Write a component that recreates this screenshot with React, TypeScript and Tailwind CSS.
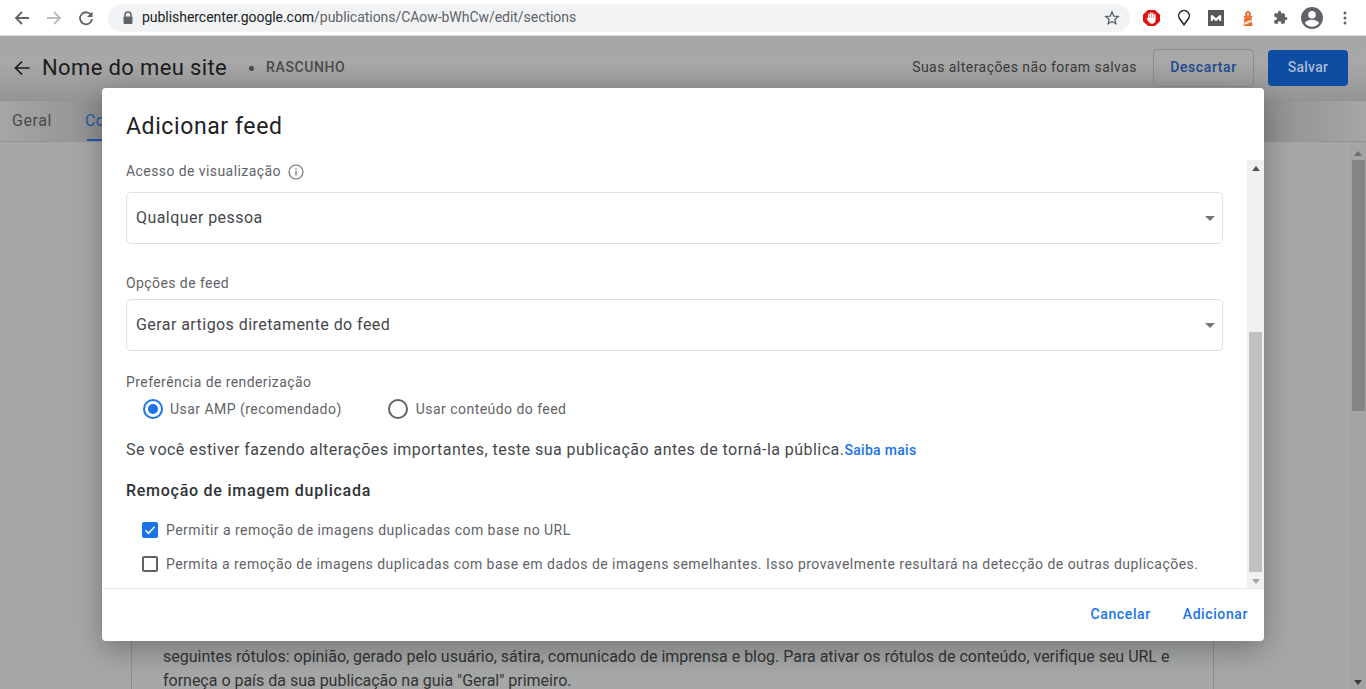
import React from "react";

const Caret = () => (
  <svg width="10" height="5" viewBox="0 0 10 5" className="block"><path d="M0 0h10L5 5z" fill="#757575" /></svg>
);

const ScrollUp = ({ c }: { c: string }) => (
  <svg width="8" height="5" viewBox="0 0 8 5" className="block"><path d="M4 0l4 5H0z" fill={c} /></svg>
);
const ScrollDown = ({ c }: { c: string }) => (
  <svg width="8" height="5" viewBox="0 0 8 5" className="block"><path d="M0 0h8L4 5z" fill={c} /></svg>
);

function SelectBox({ value }: { value: string }) {
  return (
    <div className="flex h-[52px] items-center justify-between rounded-[5px] border border-[#e0e0e0] pl-[9px] pr-[7px] text-[16px] tracking-[0.44px] text-[#45484b]">
      <span>{value}</span>
      <Caret />
    </div>
  );
}

function Toolbar() {
  return (
    <div className="flex h-[36px] shrink-0 items-center border-b border-[#dcdcdc] bg-white pl-[14px]">
      <svg width="16" height="16" viewBox="0 0 16 16" className="shrink-0"><path d="M15 8H2.500M8 2L2 8l6 6" fill="none" stroke="#5f6368" strokeWidth="1.800" /></svg>
      <svg width="16" height="16" viewBox="0 0 16 16" className="ml-[16px] shrink-0"><path d="M1 8h12.500M8 2l6 6-6 6" fill="none" stroke="#b9bbbe" strokeWidth="1.800" /></svg>
      <svg width="16" height="16" viewBox="0 0 16 16" className="ml-[16px] shrink-0"><path d="M13.200 5.200A6 6 0 1 0 14 9" fill="none" stroke="#5f6368" strokeWidth="1.800" /><path d="M14.500 1.500V7H9z" fill="#5f6368" /></svg>
      <div className="ml-[14px] flex h-[28px] w-[1022px] shrink-0 items-center rounded-full bg-[#f1f3f4] pl-[14px] pr-[10px]">
        <svg width="12" height="14" viewBox="0 0 12 14" className="shrink-0"><path d="M3 6V4a3 3 0 0 1 6 0v2" fill="none" stroke="#5f6368" strokeWidth="1.500" /><rect x="1.500" y="5.500" width="9" height="7.500" rx="1" fill="#5f6368" /></svg>
        <span className="ml-[8px] whitespace-nowrap text-[14px] tracking-[-0.04px] text-[#202124]">
          publishercenter.google.com<span className="text-[#5f6368]">/publications/CAow-bWhCw/edit/sections</span>
        </span>
        <svg width="16" height="16" viewBox="0 0 24 24" className="ml-auto shrink-0"><path d="M12 3l2.700 6.100 6.600.6-5 4.400 1.500 6.500L12 17.200l-5.800 3.400 1.500-6.500-5-4.400 6.600-.6z" fill="none" stroke="#5f6368" strokeWidth="2" /></svg>
      </div>
      <svg width="17" height="16" viewBox="0 0 17 16" className="ml-[13px] shrink-0">
        <path d="M5 0h7l5 4.800v6.400L12 16H5l-5-4.800V4.800z" fill="#e0120f" />
        <g fill="#fff">
          <rect x="5" y="3.500" width="1.600" height="6" rx=".8" />
          <rect x="7" y="2.300" width="1.600" height="7" rx=".8" />
          <rect x="9" y="2.800" width="1.600" height="7" rx=".8" />
          <rect x="11" y="4" width="1.500" height="6" rx=".75" />
          <path d="M5 8h7.500v2.500c0 2-1.500 3.200-3.500 3.200-1.700 0-2.600-.8-3.300-2L3.700 9c-.3-.6.500-1.300 1.100-.8z" />
        </g>
      </svg>
      <svg width="14" height="17" viewBox="0 0 14 17" className="ml-[17px] shrink-0"><path d="M7 15.800L3 10.300a5.300 5.300 0 1 1 8 0z" fill="none" stroke="#202124" strokeWidth="1.500" /></svg>
      <svg width="16" height="16" viewBox="0 0 16 16" className="ml-[17px] shrink-0"><rect width="16" height="16" fill="#54585a" /><path d="M2.800 11V5.300h1.800L8 8.300l3.400-3h1.800V11h-2V8.400L8 11.200 4.800 8.400V11z" fill="#fff" /></svg>
      <svg width="12" height="16" viewBox="0 0 12 16" className="ml-[18px] shrink-0">
        <path d="M3.200 6V2.800L6 .5l2.800 2.300V6z" fill="#ea6a30" />
        <rect x="5" y="3" width="2" height="2.500" fill="#fbd9c2" />
        <rect x="1.800" y="6" width="8.400" height="1.600" fill="#ea6a30" />
        <path d="M2.500 7.600h7l1 8.400h-9z" fill="#ea6a30" />
        <path d="M2.300 12.600L9.400 9.400l.4 2.600-7.800 3z" fill="#fbe3d2" />
      </svg>
      <svg width="15" height="15" viewBox="0 0 24 24" className="ml-[19px] shrink-0"><path d="M20.500 11H19V7a2 2 0 0 0-2-2h-4V3.500a2.500 2.500 0 0 0-5 0V5H4a2 2 0 0 0-2 2v3.800h1.500a2.700 2.700 0 0 1 0 5.400H2V20a2 2 0 0 0 2 2h3.800v-1.500a2.700 2.700 0 0 1 5.400 0V22H17a2 2 0 0 0 2-2v-4h1.500a2.500 2.500 0 0 0 0-5z" fill="#5f6368" /></svg>
      <svg width="24" height="24" viewBox="0 0 24 24" className="ml-[12px] shrink-0"><path d="M12 1a11 11 0 1 0 0 22 11 11 0 0 0 0-22zm0 4a3.800 3.800 0 1 1 0 7.600A3.800 3.800 0 0 1 12 5zm0 15.800a8.800 8.800 0 0 1-7-3.500c0-2.300 4.700-3.600 7-3.600s7 1.300 7 3.600a8.800 8.800 0 0 1-7 3.500z" fill="#5f6368" /></svg>
      <svg width="4" height="14" viewBox="0 0 4 14" className="ml-[19px] shrink-0"><circle cx="2" cy="2" r="1.500" fill="#5f6368" /><circle cx="2" cy="7" r="1.500" fill="#5f6368" /><circle cx="2" cy="12" r="1.500" fill="#5f6368" /></svg>
    </div>
  );
}

function Background() {
  return (
    <div className="flex min-h-0 flex-1 flex-col bg-[#a6a7a7]">
      <div className="flex h-[65px] shrink-0 items-center border-b border-[#929292] bg-[linear-gradient(#a6a6a6,#a8a8a8_40%,#959595)] pl-[14px] pr-[18px]">
        <svg width="16" height="16" viewBox="0 0 16 16" className="shrink-0"><path d="M15.500 8H1.500M8 1.500L1.500 8 8 14.500" fill="none" stroke="#1c1c1c" strokeWidth="1.700" /></svg>
        <span className="mb-[2px] ml-[12px] text-[22px] tracking-[0.37px] text-[#1c1c1c]">Nome do meu site</span>
        <span className="ml-[22px] h-[5px] w-[5px] rounded-full bg-[#4a4a4a]" />
        <span className="mb-[1px] ml-[12px] text-[14px] font-medium tracking-[0.6px] text-[#4a4a4a]">RASCUNHO</span>
        <span className="mb-[1px] ml-auto text-[14px] tracking-[0.46px] text-[#3a3a3a]">Suas alterações não foram salvas</span>
        <div className="ml-[16px] flex h-[38px] w-[101px] items-center justify-center rounded-[4px] border border-[#8c8c8c] pb-[2px] text-[14px] font-medium tracking-[0.6px] text-[#204b8f]">Descartar</div>
        <div className="ml-[14px] flex h-[36px] w-[80px] items-center justify-center rounded-[4px] bg-[#0f4da2] pb-[2px] text-[14px] font-medium tracking-[0.3px] text-[#a8bad4]">Salvar</div>
      </div>
      <div className="flex h-[41px] shrink-0 items-center gap-[33px] border-b border-[#929292] bg-[linear-gradient(90deg,#a6a6a6,#8f8f8f_8%,#8f8f8f_92%,#a6a6a6)] pl-[12px]">
        <span className="text-[16px] tracking-[0.6px] text-[#4a4a4a]">Geral</span>
        <span className="text-[16px] tracking-[0.2px] text-[#1c5bb0]">Co</span>
      </div>
      <div className="flex min-h-0 flex-1">
        <div className="min-w-0 flex-1 pl-[131px] pr-[136px]">
          <div className="flex h-full flex-col justify-end border-x border-[#8e8e8e] pl-[31px] pr-[30px]">
            <div className="-mb-[4px] text-[16px] leading-[24px] tracking-[-0.012px] text-[#333436]">
              <p className="whitespace-nowrap">seguintes rótulos: opinião, gerado pelo usuário, sátira, comunicado de imprensa e blog. Para ativar os rótulos de conteúdo, verifique seu URL e</p>
              <p className="whitespace-nowrap">forneça o país da sua publicação na guia "Geral" primeiro.</p>
            </div>
          </div>
        </div>
        <div className="flex w-[16px] shrink-0 flex-col items-center bg-[#a3a4a4] pt-[9px] pb-[4px]">
          <ScrollUp c="#6e6e6e" />
          <div className="mt-[4px] h-[251px] w-[13px] bg-[#848585]" />
          <div className="mt-auto"><ScrollDown c="#3c3c3c" /></div>
        </div>
      </div>
    </div>
  );
}

function Modal() {
  return (
    <div className="absolute left-[102px] top-[88px] flex h-[553px] w-[1162px] flex-col rounded-[4px] bg-white shadow-[0_8px_30px_rgba(0,0,0,0.3)]">
      <h2 className="flex h-[72px] shrink-0 items-start pl-[24px] pt-[23px] text-[23px] font-normal leading-[32px] tracking-[0.6px] text-[#202124]">Adicionar feed</h2>
      <div className="flex min-h-0 flex-1">
        <div className="min-w-0 flex-1 pl-[24px] pr-[24px] text-[#5f6368]">
          <div className="flex h-[23px] items-center text-[14px] tracking-[0.42px]">
            Acesso de visualização
            <svg width="16" height="16" viewBox="0 0 16 16" className="ml-[7px]"><circle cx="8" cy="8" r="7" fill="none" stroke="#70757a" strokeWidth="1.200" /><path d="M8 7v4.500M8 4.300v1.500" stroke="#70757a" strokeWidth="1.300" /></svg>
          </div>
          <div className="mt-[9px]"><SelectBox value="Qualquer pessoa" /></div>
          <div className="mt-[28px] flex h-[23px] items-center text-[14px] tracking-[0.42px]">Opções de feed</div>
          <div className="mt-[4px]"><SelectBox value="Gerar artigos diretamente do feed" /></div>
          <div className="mt-[20px] flex h-[23px] items-center text-[14px] tracking-[0.42px]">Preferência de renderização</div>
          <div className="mt-[5px] flex h-[20px] items-center pl-[17px] text-[14px] tracking-[0.46px]">
            <span className="flex h-[20px] w-[20px] items-center justify-center rounded-full border-2 border-[#1a73e8]">
              <span className="h-[10px] w-[10px] rounded-full bg-[#1a73e8]" />
            </span>
            <span className="ml-[7px]">Usar AMP (recomendado)</span>
            <span className="ml-[46px] h-[20px] w-[20px] rounded-full border-2 border-[#5f6368]" />
            <span className="ml-[8px]">Usar conteúdo do feed</span>
          </div>
          <div className="mt-[20px] flex h-[22px] items-center whitespace-nowrap text-[16px] tracking-[0.46px] text-[#45484b]">
            Se você estiver fazendo alterações importantes, teste sua publicação antes de torná-la pública.
            <span className="text-[14px] font-medium tracking-[0.3px] text-[#1a73e8]">Saiba mais</span>
          </div>
          <div className="mt-[19px] flex h-[22px] items-center text-[16px] font-medium tracking-[0.74px] text-[#303336]">Remoção de imagem duplicada</div>
          <div className="mt-[18px] flex h-[20px] items-center pl-[16px] text-[14px] tracking-[0.46px]">
            <span className="flex h-[16px] w-[16px] items-center justify-center rounded-[2px] bg-[#1a73e8]">
              <svg width="12" height="12" viewBox="0 0 12 12"><path d="M1.500 6.300l3 3 6-6.600" fill="none" stroke="#fff" strokeWidth="1.500" /></svg>
            </span>
            <span className="ml-[8px]">Permitir a remoção de imagens duplicadas com base no URL</span>
          </div>
          <div className="mt-[14px] flex h-[20px] items-center whitespace-nowrap pl-[16px] text-[14px] tracking-[0.46px]">
            <span className="h-[16px] w-[16px] rounded-[2px] border-2 border-[#5f6368]" />
            <span className="ml-[8px]">Permita a remoção de imagens duplicadas com base em dados de imagens semelhantes. Isso provavelmente resultará na detecção de outras duplicações.</span>
          </div>
        </div>
        <div className="flex w-[17px] shrink-0 flex-col items-center bg-[#f1f1f1] pt-[6px] pb-[4px]">
          <ScrollUp c="#505050" />
          <div className="mt-auto h-[240px] w-[13px] bg-[#c1c1c1]" />
          <div className="mt-[7px]"><ScrollDown c="#a3a3a3" /></div>
        </div>
      </div>
      <div className="flex h-[53px] shrink-0 items-center justify-end gap-[32px] border-t border-[#e8e8e8] pb-[2px] pr-[16px] text-[14px] font-medium tracking-[0.6px] text-[#1a73e8]">
        <span>Cancelar</span>
        <span>Adicionar</span>
      </div>
    </div>
  );
}

export default function App() {
  return (
    <div className="relative flex h-[689px] w-[1366px] flex-col overflow-hidden font-['Roboto',sans-serif]">
      <Toolbar />
      <Background />
      <div className="absolute left-[87px] top-[139px] h-[2px] w-[16px] bg-[#1c5bb0]" />
      <Modal />
    </div>
  );
}
